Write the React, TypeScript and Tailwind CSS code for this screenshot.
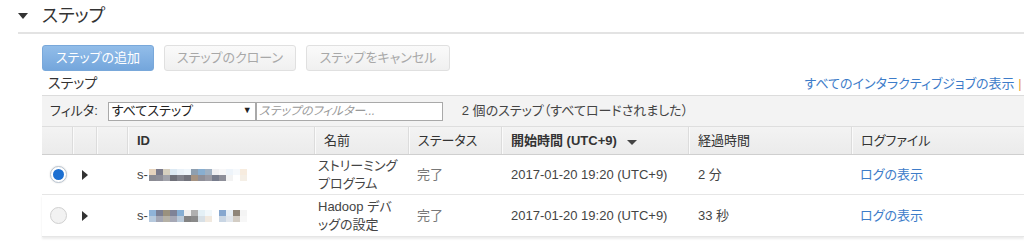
const font = "font-['Liberation_Sans','Noto_Sans_CJK_JP',sans-serif] [font-feature-settings:'palt']";

const mosaic1 = [
  ["#e6d3bd", "#7b7b8c", "#d6cfbf", "#dce9f3", "#e9f1f8", "#eef5fb", "#8e9fb0", "#88aed0", "#9fb0c2", "#f0f0f2", "#f7f7f8", "#eef4fa", "#f6f9fc", "#f7ecdf", "#ffffff"],
  ["#8b8b93", "#8e8e98", "#a2a3ab", "#6f7079", "#82838c", "#72737c", "#a59382", "#8f8f98", "#9a9aa3", "#777c8c", "#8e8f99", "#f3f3f3", "#ffffff", "#f5efe6", "#ffffff"],
];
const mosaic2 = [
  ["#8fb3d8", "#7a7f95", "#9a917e", "#7f8397", "#86aed3", "#f0f0f0", "#b0b0b0", "#e4f0f6", "#f2f8fb", "#ffffff", "#86a7cf", "#e6eef5", "#8f8578", "#f4f4f4", "#ffffff"],
  ["#b6c9dd", "#a3a6b4", "#b5b1a6", "#a6a8b5", "#b9c9d9", "#838383", "#8a8a8a", "#d8e0e6", "#f1e9df", "#ffffff", "#c9d6e4", "#e1e6ec", "#d3cdc4", "#f7f7f7", "#ffffff"],
];

function Mosaic({ cells }: { cells: string[][] }) {
  return (
    <span className="inline-flex flex-col align-middle">
      {cells.map((row, i) => (
        <span key={i} className="flex">
          {row.map((c, j) => (
            <span key={j} className="w-[7px] h-[6px]" style={{ backgroundColor: c }} />
          ))}
        </span>
      ))}
    </span>
  );
}

function Radio({ checked }: { checked?: boolean }) {
  return checked ? (
    <span className="flex w-[17px] h-[17px] rounded-full border border-[#b9c4d0] bg-white items-center justify-center shadow-[0_0_2px_rgba(0,0,0,0.15)]">
      <span className="w-[11px] h-[11px] rounded-full bg-[#1c6fd1]" />
    </span>
  ) : (
    <span className="block w-[17px] h-[17px] rounded-full border border-[#d0d0d0] bg-[#f2f2f2]" />
  );
}

function Arrow() {
  return <span className="block w-0 h-0 border-y-[5px] border-y-transparent border-l-[6px] border-l-[#333]" />;
}

const cols = [
  "w-[31px]",
  "w-[24px]",
  "w-[31px]",
  "w-[187px]",
  "w-[94px]",
  "w-[93px]",
  "w-[187px]",
  "w-[163px]",
  "flex-1",
];

export default function App() {
  return (
    <div className={`w-[1024px] h-[242px] overflow-hidden bg-white text-[13px] text-[#444] ${font}`}>
      <div className="flex items-center h-[32px] pl-[18px]">
        <span className="w-0 h-0 border-x-[5px] border-x-transparent border-t-[6px] border-t-[#333] mr-[14px]" />
        <span className="text-[18px] text-[#333] leading-none">ステップ</span>
      </div>
      <div className="ml-[18px] h-[2px] bg-[#e3e3e3]" />

      <div className="pl-[42px]">
        <div className="flex gap-[10px] pt-[11px]">
          <button className="h-[26px] w-[112px] rounded-[3px] border border-[#79a8da] bg-gradient-to-b from-[#92bde9] to-[#74a6dc] text-white text-[13px]">
            ステップの追加
          </button>
          <button className="h-[26px] w-[132px] rounded-[3px] border border-[#e0e0e0] bg-gradient-to-b from-[#fafafa] to-[#f0f0f0] text-[#a8a8a8] text-[13px]">
            ステップのクローン
          </button>
          <button className="h-[26px] w-[144px] rounded-[3px] border border-[#e0e0e0] bg-gradient-to-b from-[#fafafa] to-[#f0f0f0] text-[#a8a8a8] text-[13px]">
            ステップをキャンセル
          </button>
        </div>

        <div className="flex items-end justify-between h-[21px] mt-[1px]">
          <span className="ml-[6px] text-[14px] text-[#333] leading-none pb-[3px]">ステップ</span>
          <span className="whitespace-nowrap text-[13px] text-[#3d7cc9] leading-none pb-[3px] -mr-[13px]">
            すべてのインタラクティブジョブの表示 <span className="text-[#e8a23a]">|</span> す
          </span>
        </div>

        <div className="mt-[2px] flex items-center h-[31px] bg-[#f3f3f3] border-t border-[#dcdcdc] pl-[8px]">
          <span className="text-[#333] mr-[10px]">フィルタ:</span>
          <span className="flex items-center justify-between w-[148px] h-[19px] bg-white border border-[#a9a9a9] px-[3px] text-[#222]">
            すべてステップ
            <span className="text-[9px]">▼</span>
          </span>
          <span className="flex items-center w-[187px] h-[19px] bg-white border border-[#a9a9a9] px-[2px] text-[#999] italic text-[12px]">
            ステップのフィルター...
          </span>
          <span className="ml-[19px] text-[#444]">2 個のステップ（すべてロードされました）</span>
        </div>

        <div className="flex h-[29px] items-stretch bg-gradient-to-b from-[#f3f3f3] to-[#ebebeb] border-t border-[#dedede] border-b border-b-[#cfcfcf] font-bold text-[#333]">
          {["", "", "", "ID", "名前", "ステータス", "開始時間 (UTC+9)", "経過時間", "ログファイル"].map((h, i) => (
            <div
              key={i}
              className={`${cols[i]} flex items-center pl-[9px] ${i < 8 ? "border-r border-[#dcdcdc] shadow-[1px_0_0_#fafafa]" : ""} ${i === 4 || i === 5 || i === 7 || i === 8 ? "font-normal" : ""}`}
            >
              {h}
              {i === 6 && <span className="ml-[10px] mt-[3px] w-0 h-0 border-x-[5px] border-x-transparent border-t-[5px] border-t-[#444]" />}
            </div>
          ))}
        </div>

        {[
          { checked: true, mosaic: mosaic1, name: ["ストリーミング", "プログラム"], time: "2 分" },
          { checked: false, mosaic: mosaic2, name: ["Hadoop デバ", "ッグの設定"], time: "33 秒" },
        ].map((r, i) => (
          <div key={i} className={`flex items-center ${i === 0 ? "h-[40px]" : "h-[42px]"} border-b border-[#e6e6e6] ${i === 1 ? "shadow-[0_2px_2px_rgba(0,0,0,0.08)]" : ""}`}>
            <div className={`${cols[0]} flex justify-center pl-[1px]`}>
              <Radio checked={r.checked} />
            </div>
            <div className={`${cols[1]} flex justify-center`}>
              <Arrow />
            </div>
            <div className={cols[2]} />
            <div className={`${cols[3]} pl-[9px] flex items-center`}>
              <span className="mr-[1px]">s-</span>
              <Mosaic cells={r.mosaic} />
            </div>
            <div className={`${cols[4]} pl-[3px] leading-[18px]`}>
              <div>{r.name[0]}</div>
              <div>{r.name[1]}</div>
            </div>
            <div className={`${cols[5]} pl-[8px] text-[#777]`}>完了</div>
            <div className={`${cols[6]} pl-[9px]`}>2017-01-20 19:20 (UTC+9)</div>
            <div className={`${cols[7]} pl-[9px]`}>{r.time}</div>
            <div className={`${cols[8]} pl-[8px] text-[#3d7cc9]`}>ログの表示</div>
          </div>
        ))}
      </div>
    </div>
  );
}
